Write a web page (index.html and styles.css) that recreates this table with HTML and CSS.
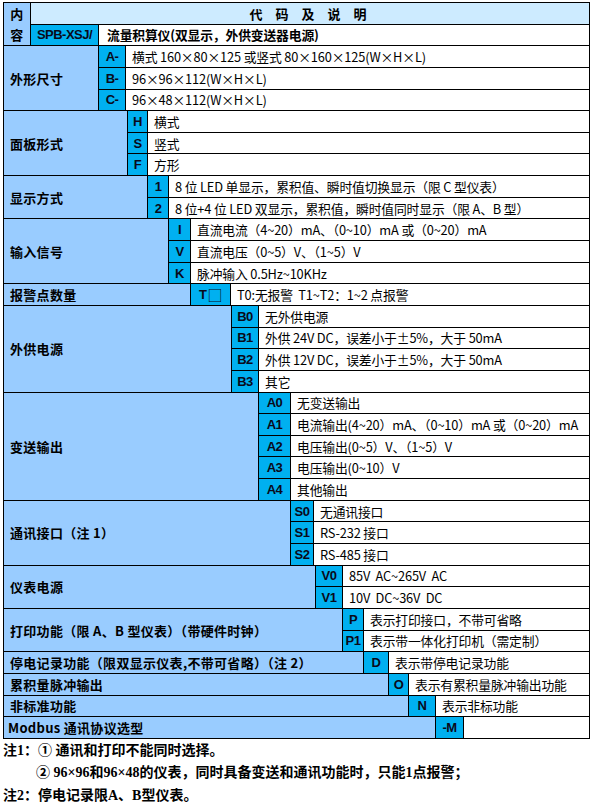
FILE: index.html
```html
<!DOCTYPE html>
<html lang="zh-CN">
<head>
<meta charset="utf-8">
<title>代码及说明</title>
<link rel="stylesheet" href="styles.css">
</head>
<body>
<div class="sheet">
  <div class="table">
    <div class="sec">
      <div class="lab head-lab"><span>内</span><span>容</span></div>
      <div class="rows">
        <div class="row"><div class="title">代 码 及 说 明</div></div>
        <div class="row"><div class="code w67">SPB-XSJ/</div><div class="desc bold">流量积算仪(双显示，外供变送器电源)</div></div>
      </div>
    </div>

    <div class="sec">
      <div class="lab l94">外形尺寸</div>
      <div class="rows">
        <div class="row"><div class="code w26">A-</div><div class="desc">横式 160×80×125 或竖式 80×160×125(W×H×L)</div></div>
        <div class="row"><div class="code w26">B-</div><div class="desc">96×96×112(W×H×L)</div></div>
        <div class="row"><div class="code w26">C-</div><div class="desc">96×48×112(W×H×L)</div></div>
      </div>
    </div>

    <div class="sec">
      <div class="lab l123">面板形式</div>
      <div class="rows">
        <div class="row"><div class="code w19">H</div><div class="desc">横式</div></div>
        <div class="row"><div class="code w19">S</div><div class="desc">竖式</div></div>
        <div class="row"><div class="code w19">F</div><div class="desc">方形</div></div>
      </div>
    </div>

    <div class="sec">
      <div class="lab l143">显示方式</div>
      <div class="rows">
        <div class="row"><div class="code w20">1</div><div class="desc">8 位 LED 单显示，累积值、瞬时值切换显示（限 C 型仪表）</div></div>
        <div class="row"><div class="code w20">2</div><div class="desc">8 位+4 位 LED 双显示，累积值，瞬时值同时显示（限 A、B 型）</div></div>
      </div>
    </div>

    <div class="sec">
      <div class="lab l164">输入信号</div>
      <div class="rows">
        <div class="row"><div class="code w21">I</div><div class="desc">直流电流（4~20）mA、（0~10）mA 或（0~20）mA</div></div>
        <div class="row"><div class="code w21">V</div><div class="desc">直流电压（0~5）V、（1~5）V</div></div>
        <div class="row"><div class="code w21">K</div><div class="desc">脉冲输入 0.5Hz~10KHz</div></div>
      </div>
    </div>

    <div class="sec">
      <div class="lab l186">报警点数量</div>
      <div class="rows">
        <div class="row"><div class="code w39">T<span class="box">□</span></div><div class="desc">T0:无报警&nbsp;&nbsp;T1~T2：1~2 点报警</div></div>
      </div>
    </div>

    <div class="sec">
      <div class="lab l227">外供电源</div>
      <div class="rows">
        <div class="row"><div class="code w26">B0</div><div class="desc">无外供电源</div></div>
        <div class="row"><div class="code w26">B1</div><div class="desc">外供 24V DC，误差小于±5%，大于 50mA</div></div>
        <div class="row"><div class="code w26">B2</div><div class="desc">外供 12V DC，误差小于±5%，大于 50mA</div></div>
        <div class="row"><div class="code w26">B3</div><div class="desc">其它</div></div>
      </div>
    </div>

    <div class="sec">
      <div class="lab l254">变送输出</div>
      <div class="rows">
        <div class="row"><div class="code w31">A0</div><div class="desc">无变送输出</div></div>
        <div class="row"><div class="code w31">A1</div><div class="desc">电流输出(4~20）mA、（0~10）mA 或（0~20）mA</div></div>
        <div class="row"><div class="code w31">A2</div><div class="desc">电压输出(0~5）V、（1~5）V</div></div>
        <div class="row"><div class="code w31">A3</div><div class="desc">电压输出(0~10）V</div></div>
        <div class="row"><div class="code w31">A4</div><div class="desc">其他输出</div></div>
      </div>
    </div>

    <div class="sec">
      <div class="lab l286">通讯接口（注 1）</div>
      <div class="rows">
        <div class="row"><div class="code w22">S0</div><div class="desc">无通讯接口</div></div>
        <div class="row"><div class="code w22">S1</div><div class="desc">RS-232 接口</div></div>
        <div class="row"><div class="code w22">S2</div><div class="desc">RS-485 接口</div></div>
      </div>
    </div>

    <div class="sec">
      <div class="lab l311">仪表电源</div>
      <div class="rows">
        <div class="row"><div class="code w26">V0</div><div class="desc">85V&nbsp;&nbsp;AC~265V&nbsp;&nbsp;AC</div></div>
        <div class="row"><div class="code w26">V1</div><div class="desc">10V&nbsp;&nbsp;DC~36V&nbsp;&nbsp;DC</div></div>
      </div>
    </div>

    <div class="sec">
      <div class="lab l338">打印功能（限 A、B 型仪表）（带硬件时钟）</div>
      <div class="rows">
        <div class="row"><div class="code w20">P</div><div class="desc">表示打印接口，不带可省略</div></div>
        <div class="row"><div class="code w20">P1</div><div class="desc">表示带一体化打印机（需定制）</div></div>
      </div>
    </div>

    <div class="sec">
      <div class="lab l359">停电记录功能（限双显示仪表,不带可省略）（注 2）</div>
      <div class="rows">
        <div class="row"><div class="code w24">D</div><div class="desc">表示带停电记录功能</div></div>
      </div>
    </div>

    <div class="sec">
      <div class="lab l384">累积量脉冲输出</div>
      <div class="rows">
        <div class="row"><div class="code w19">O</div><div class="desc">表示有累积量脉冲输出功能</div></div>
      </div>
    </div>

    <div class="sec">
      <div class="lab l404">非标准功能</div>
      <div class="rows">
        <div class="row"><div class="code w26">N</div><div class="desc">表示非标功能</div></div>
      </div>
    </div>

    <div class="sec">
      <div class="lab l431 modbus">Modbus 通讯协议选型</div>
      <div class="rows">
        <div class="row"><div class="code w27">-M</div><div class="desc"></div></div>
      </div>
    </div>
  </div>

  <div class="notes">
    <p>注1：① 通讯和打印不能同时选择。</p>
    <p class="indent">② 96×96和96×48的仪表，同时具备变送和通讯功能时，只能1点报警；</p>
    <p>注2：停电记录限A、B型仪表。</p>
  </div>
</div>
</body>
</html>
```

FILE: styles.css
```css
html, body {
  margin: 0;
  padding: 0;
  background: #ffffff;
}

.sheet {
  padding: 2px 0 0 3px;
  font-family: "Noto Sans CJK SC", "Liberation Sans", sans-serif;
  color: #000;
}

.table {
  width: 587px;
  box-sizing: border-box;
  background: #000;
  padding: 1px;
  display: flex;
  flex-direction: column;
  gap: 1px;
}

.sec {
  display: flex;
  gap: 1px;
}

.rows {
  flex: 1;
  display: flex;
  flex-direction: column;
  gap: 1px;
}

.row {
  display: flex;
  gap: 1px;
  height: 20.65px;
}

.lab {
  flex: none;
  background: #99ccff;
  font-weight: 700;
  font-size: 13px;
  display: flex;
  align-items: center;
  padding-left: 6px;
  box-sizing: border-box;
  white-space: nowrap;
  letter-spacing: 0.3px;
}

.head-lab {
  width: 26px;
  flex-direction: column;
  justify-content: space-around;
  padding-left: 0;
}

.modbus { padding-left: 4px; }

.title {
  flex: 1;
  background: #cdebff;
  font-weight: 700;
  font-size: 13px;
  display: flex;
  align-items: center;
  justify-content: center;
  letter-spacing: 4px;
  word-spacing: 2px;
}

.code {
  flex: none;
  background: #00b0f0;
  font-family: "Liberation Sans", "Noto Sans CJK SC", sans-serif;
  font-weight: 700;
  font-size: 13px;
  display: flex;
  align-items: center;
  justify-content: center;
  letter-spacing: -0.5px;
  white-space: nowrap;
  color: #0a0a1a;
}

.code .box {
  font-family: "Noto Sans CJK SC", sans-serif;
  font-weight: 400;
  font-size: 15px;
  margin-left: 1px;
}

.desc {
  flex: 1;
  background: #ffffff;
  font-size: 12.8px;
  letter-spacing: -0.15px;
  display: flex;
  align-items: center;
  padding-left: 6px;
  white-space: nowrap;
  overflow: hidden;
}

.desc.bold { font-weight: 700; padding-left: 8px; }

.l94 { width: 94px; }
.l123 { width: 123px; }
.l143 { width: 143px; }
.l164 { width: 164px; }
.l186 { width: 186px; }
.l227 { width: 227px; }
.l254 { width: 254px; }
.l286 { width: 286px; }
.l311 { width: 311px; }
.l338 { width: 338px; }
.l359 { width: 359px; }
.l384 { width: 384px; }
.l404 { width: 404px; }
.l431 { width: 431px; }

.w19 { width: 19px; }
.w20 { width: 20px; }
.w21 { width: 21px; }
.w22 { width: 22px; }
.w24 { width: 24px; }
.w26 { width: 26px; }
.w27 { width: 27px; }
.w31 { width: 31px; }
.w39 { width: 39px; }
.w67 { width: 67px; }

.notes {
  font-family: "Liberation Serif", "Noto Sans CJK SC", serif;
  font-weight: 700;
  font-size: 14px;
  padding-top: 1px;
}

.notes p {
  margin: 0;
  line-height: 22.5px;
  white-space: nowrap;
}

.notes .indent { padding-left: 33px; }
```
